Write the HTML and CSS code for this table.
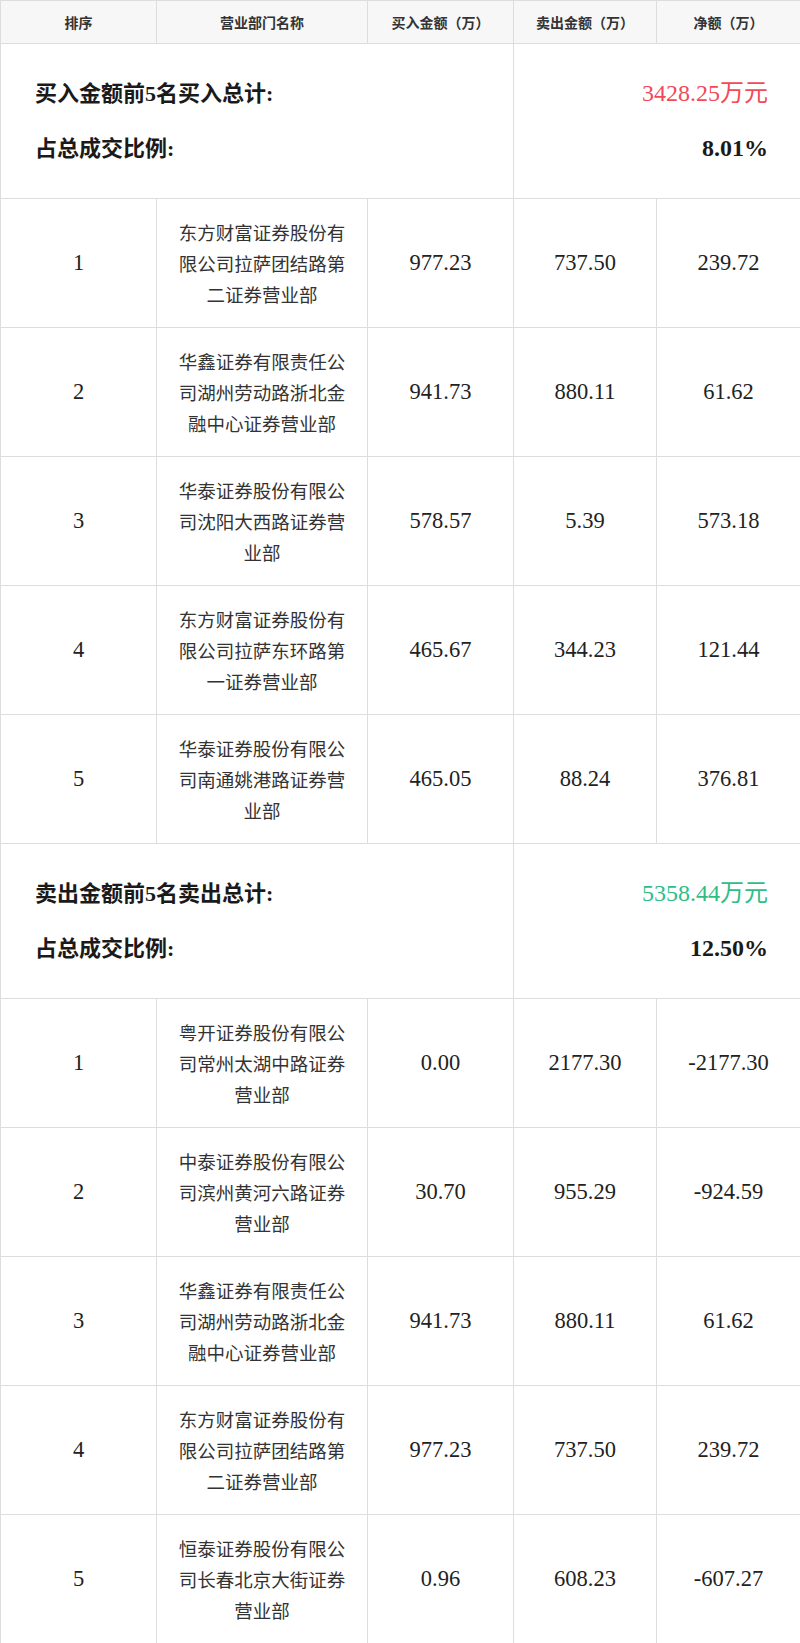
FILE: index.html
```html
<!DOCTYPE html>
<html lang="zh-CN">
<head>
<meta charset="utf-8">
<title>龙虎榜</title>
<link rel="stylesheet" href="styles.css">
</head>
<body>
<table class="lhb">
  <colgroup>
    <col class="c-rank"><col class="c-name"><col class="c-buy"><col class="c-sell"><col class="c-net">
  </colgroup>
  <thead>
    <tr class="head">
      <th>排序</th><th>营业部门名称</th><th>买入金额（万）</th><th>卖出金额（万）</th><th>净额（万）</th>
    </tr>
  </thead>
  <tbody>
    <tr class="sum">
      <td colspan="3" class="sum-label"><div class="ln">买入金额前5名买入总计:</div><div class="ln">占总成交比例:</div></td>
      <td colspan="2" class="sum-val"><div class="ln red">3428.25万元</div><div class="ln pct">8.01%</div></td>
    </tr>
    <tr class="row"><td class="num">1</td><td class="name">东方财富证券股份有限公司拉萨团结路第二证券营业部</td><td class="num">977.23</td><td class="num">737.50</td><td class="num">239.72</td></tr>
    <tr class="row"><td class="num">2</td><td class="name">华鑫证券有限责任公司湖州劳动路浙北金融中心证券营业部</td><td class="num">941.73</td><td class="num">880.11</td><td class="num">61.62</td></tr>
    <tr class="row"><td class="num">3</td><td class="name">华泰证券股份有限公司沈阳大西路证券营业部</td><td class="num">578.57</td><td class="num">5.39</td><td class="num">573.18</td></tr>
    <tr class="row"><td class="num">4</td><td class="name">东方财富证券股份有限公司拉萨东环路第一证券营业部</td><td class="num">465.67</td><td class="num">344.23</td><td class="num">121.44</td></tr>
    <tr class="row"><td class="num">5</td><td class="name">华泰证券股份有限公司南通姚港路证券营业部</td><td class="num">465.05</td><td class="num">88.24</td><td class="num">376.81</td></tr>
    <tr class="sum">
      <td colspan="3" class="sum-label"><div class="ln">卖出金额前5名卖出总计:</div><div class="ln">占总成交比例:</div></td>
      <td colspan="2" class="sum-val"><div class="ln green">5358.44万元</div><div class="ln pct">12.50%</div></td>
    </tr>
    <tr class="row"><td class="num">1</td><td class="name">粤开证券股份有限公司常州太湖中路证券营业部</td><td class="num">0.00</td><td class="num">2177.30</td><td class="num">-2177.30</td></tr>
    <tr class="row"><td class="num">2</td><td class="name">中泰证券股份有限公司滨州黄河六路证券营业部</td><td class="num">30.70</td><td class="num">955.29</td><td class="num">-924.59</td></tr>
    <tr class="row"><td class="num">3</td><td class="name">华鑫证券有限责任公司湖州劳动路浙北金融中心证券营业部</td><td class="num">941.73</td><td class="num">880.11</td><td class="num">61.62</td></tr>
    <tr class="row"><td class="num">4</td><td class="name">东方财富证券股份有限公司拉萨团结路第二证券营业部</td><td class="num">977.23</td><td class="num">737.50</td><td class="num">239.72</td></tr>
    <tr class="row"><td class="num">5</td><td class="name">恒泰证券股份有限公司长春北京大街证券营业部</td><td class="num">0.96</td><td class="num">608.23</td><td class="num">-607.27</td></tr>
  </tbody>
</table>
</body>
</html>
```
FILE: styles.css
```css
html, body {
  margin: 0;
  padding: 0;
  background: #ffffff;
}
body {
  font-family: "Liberation Serif", "Noto Sans CJK SC", serif;
  color: #222222;
}
.lhb {
  width: 800px;
  border-collapse: collapse;
  table-layout: fixed;
}
.c-rank { width: 156px; }
.c-name { width: 211px; }
.c-buy { width: 146px; }
.c-sell { width: 143px; }
.c-net { width: 144px; }
.lhb th, .lhb td {
  border: 1px solid #dddddd;
  padding: 0;
  text-align: center;
  vertical-align: middle;
}
.head th {
  height: 42px;
  background: #f7f7f7;
  font-family: "Noto Sans CJK SC", sans-serif;
  font-size: 14px;
  font-weight: 700;
  color: #333333;
}
.sum td {
  height: 154px;
}
.lhb .sum-label {
  text-align: left;
  padding-left: 34px;
  font-family: "Liberation Serif", "Noto Sans CJK SC", serif;
  font-size: 22px;
  font-weight: 700;
  color: #1a1a1a;
}
.lhb .sum-val {
  text-align: right;
  padding-right: 32px;
  font-size: 24px;
}
.ln {
  height: 55px;
  line-height: 55px;
  white-space: nowrap;
}
.red { color: #f24957; }
.green { color: #2ebd85; }
.pct { font-weight: 700; color: #1a1a1a; }
.row td {
  height: 128px;
}
.num {
  font-size: 22.5px;
  color: #222222;
}
.lhb .name {
  font-family: "Noto Sans CJK SC", sans-serif;
  font-size: 18.5px;
  line-height: 31px;
  color: #333333;
  padding: 0 18px;
}
```
